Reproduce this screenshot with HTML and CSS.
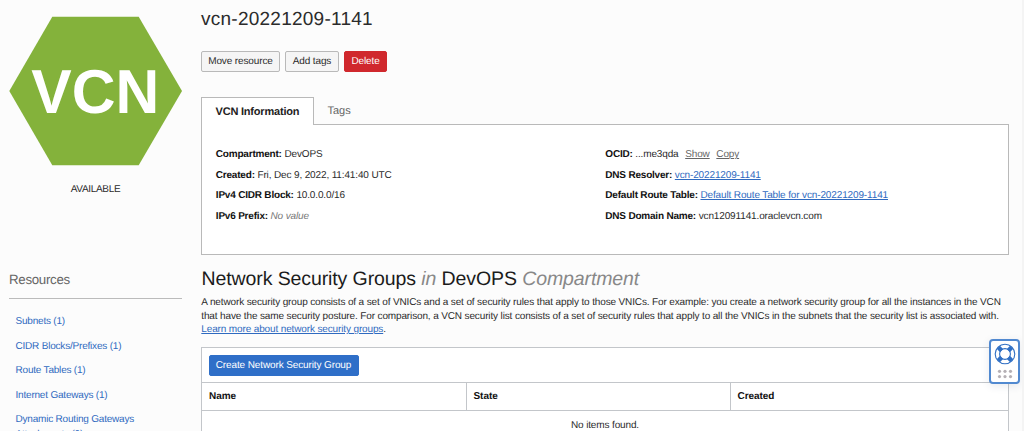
FILE: index.html
```html
<!DOCTYPE html>
<html lang="en">
<head>
<meta charset="utf-8">
<title>vcn-20221209-1141</title>
<link rel="stylesheet" href="styles.css">
</head>
<body>
<div class="page">
  <aside class="sidebar">
    <svg class="hexagon" viewBox="0 0 173 150" width="173" height="150" role="img" aria-label="VCN">
      <path d="M43.3 .7H129.7L173 75 129.7 149.3H43.3L.3 75Z" fill="#84b23b"/>
      <text x="22.3" y="97.2" textLength="128" lengthAdjust="spacingAndGlyphs" class="hexagon-label">VCN</text>
    </svg>
    <div class="status">AVAILABLE</div>
    <h2 class="resources-title">Resources</h2>
    <nav class="resources">
      <a>Subnets (1)</a>
      <a>CIDR Blocks/Prefixes (1)</a>
      <a>Route Tables (1)</a>
      <a>Internet Gateways (1)</a>
      <a class="wrapped">Dynamic Routing Gateways Attachments (0)</a>
    </nav>
  </aside>
  <main class="main">
    <h1 class="title">vcn-20221209-1141</h1>
    <div class="actions">
      <button class="btn btn-move">Move resource</button>
      <button class="btn btn-tags">Add tags</button>
      <button class="btn btn-delete">Delete</button>
    </div>
    <div class="tabs">
      <div class="tab tab-active">VCN Information</div>
      <div class="tab">Tags</div>
    </div>
    <section class="info">
      <div class="info-col">
        <p><b>Compartment:</b> DevOPS</p>
        <p><b>Created:</b> Fri, Dec 9, 2022, 11:41:40 UTC</p>
        <p><b>IPv4 CIDR Block:</b> 10.0.0.0/16</p>
        <p><b>IPv6 Prefix:</b> <i>No value</i></p>
      </div>
      <div class="info-col">
        <p><b>OCID:</b> ...me3qda <a class="muted">Show</a> <a class="muted">Copy</a></p>
        <p><b>DNS Resolver:</b> <a class="link">vcn-20221209-1141</a></p>
        <p><b>Default Route Table:</b> <a class="link">Default Route Table for vcn-20221209-1141</a></p>
        <p><b>DNS Domain Name:</b> vcn12091141.oraclevcn.com</p>
      </div>
    </section>
    <h2 class="heading">Network Security Groups <i>in</i> DevOPS <i>Compartment</i></h2>
    <div class="description">
      <div>A network security group consists of a set of VNICs and a set of security rules that apply to those VNICs. For example: you create a network security group for all the instances in the VCN</div>
      <div>that have the same security posture. For comparison, a VCN security list consists of a set of security rules that apply to all the VNICs in the subnets that the security list is associated with.</div>
      <div><a class="link">Learn more about network security groups</a>.</div>
    </div>
    <section class="panel">
      <div class="toolbar"><button class="btn btn-create">Create Network Security Group</button></div>
      <div class="table-head"><div>Name</div><div>State</div><div>Created</div></div>
      <div class="empty">No items found.</div>
    </section>
  </main>
  <div class="help">
    <svg width="22" height="22" viewBox="0 0 22 22" fill="none" stroke="#2f6fc4">
      <circle cx="11" cy="11" r="9.8" stroke-width="1.1"/>
      <circle cx="11" cy="11" r="5.4" stroke-width="1.1"/>
      <g stroke-width="4.4">
        <path d="M4.3 4.3 7.6 7.6M17.7 4.3 14.4 7.6M4.3 17.7 7.6 14.4M17.7 17.7 14.4 14.4"/>
      </g>
    </svg>
    <svg width="16" height="10" viewBox="0 0 16 10" fill="#b5b0b5">
      <circle cx="2.500" cy="2.300" r="1.600"/><circle cx="8" cy="2.300" r="1.600"/><circle cx="13.500" cy="2.300" r="1.600"/>
      <circle cx="2.500" cy="7.600" r="1.600"/><circle cx="8" cy="7.600" r="1.600"/><circle cx="13.500" cy="7.600" r="1.600"/>
    </svg>
  </div>
</div>
</body>
</html>
```
FILE: styles.css
```css
* { box-sizing: border-box; }
body {
  margin: 0;
  background: #fcfcfc;
  color: #2b2b2b;
  font-family: "Liberation Sans", Arial, sans-serif;
  font-size: 10px;
  letter-spacing: -.135px;
  text-rendering: geometricPrecision;
  overflow: hidden;
}
.page {
  position: relative;
  display: flex;
  gap: 19px;
  width: 1024px;
  height: 431px;
  padding-left: 9px;
  overflow: hidden;
  border-right: 2px solid #f4f4f4;
}
h1, h2, p { margin: 0; font-weight: 400; }
.sidebar { width: 173px; flex: none; }
.hexagon { display: block; margin-top: 16px; }
.hexagon-label { font-size: 62px; font-weight: 700; fill: #fff; letter-spacing: 0; }
.status { margin-top: 17px; line-height: 14px; text-align: center; font-size: 10px; letter-spacing: -.3px; }
.resources-title { margin-top: 74px; height: 28px; line-height: 18px; border-bottom: 1px solid #bbb; font-size: 13.300px; letter-spacing: -.3px; color: #666; }
.resources { display: flex; flex-direction: column; gap: 10.600px; padding: 16px 30px 0 6.500px; letter-spacing: -.2px; }
.resources a { color: #2f6ac0; line-height: 14px; }
.resources .wrapped { line-height: 14.400px; }
.main { width: 808px; flex: none; }
.title { margin-top: 8px; line-height: 24px; font-size: 19px; letter-spacing: .25px; }
.actions { display: flex; gap: 5px; margin-top: 19px; }
.btn { height: 21px; padding: 0; border: 1px solid #b9b9b9; border-radius: 2px; background: #f5f5f5; color: #2b2b2b; font: 10px "Liberation Sans", Arial, sans-serif; letter-spacing: -.12px; text-rendering: geometricPrecision; white-space: nowrap; }
.btn-move { width: 79px; }
.btn-tags { width: 54px; }
.btn-delete { width: 43px; background: #d0282d; border-color: #d0282d; color: #fff; }
.tabs { display: flex; margin-top: 25px; height: 28px; position: relative; z-index: 1; margin-bottom: -1px; }
.tab { padding: 0 13.500px; line-height: 28px; font-size: 11px; letter-spacing: 0; color: #666; }
.tab-active { width: 113px; padding: 0 13.500px; border: 1px solid #b9b9b9; border-bottom: 0; background: #fff; color: #222; font-weight: 700; letter-spacing: -.2px; white-space: nowrap; }
.info { display: flex; height: 131px; padding: 20px 13.800px; border: 1px solid #b9b9b9; background: #fff; }
.info-col { width: 389.500px; flex: none; }
.info p { line-height: 20.650px; white-space: nowrap; }
.info b { color: #111; letter-spacing: -.2px; }
.info i { color: #777; }
.link { color: #2f6ac0; text-decoration: underline; }
.muted { margin-left: 4px; color: #666; text-decoration: underline; }
.heading { margin-top: 12px; padding-left: .5px; line-height: 24px; font-size: 19.500px; letter-spacing: -.1px; color: #1b1b1b; }
.heading i { color: #888; }
.description { margin-top: 5px; padding-left: .3px; line-height: 13.600px; white-space: nowrap; }
.panel { margin-top: 10.200px; height: 100px; border: 1px solid #c3c6ca; background: #fff; }
.toolbar { height: 35px; padding: 7px 6.500px; border-bottom: 1px solid #c3c6ca; }
.btn-create { display: block; width: 150px; background: #2f6fc8; border-color: #2f6fc8; color: #fff; }
.table-head { display: grid; grid-template-columns: 264px 264px 1fr; height: 28px; border-bottom: 1px solid #c3c6ca; font-weight: 700; color: #111; line-height: 28px; letter-spacing: -.05px; }
.table-head div { padding-left: 7px; }
.table-head div + div { padding-left: 6.500px; border-left: 1px solid #c3c6ca; }
.empty { text-align: center; line-height: 29px; }
.help { position: absolute; z-index: 2; left: 989px; top: 339px; width: 31px; height: 45px; padding-top: 2px; display: flex; flex-direction: column; align-items: center; gap: 4px; border: 2px solid #5189d0; border-radius: 4px; background: #fff; box-shadow: 0 2px 8px #3040601c; }
```
